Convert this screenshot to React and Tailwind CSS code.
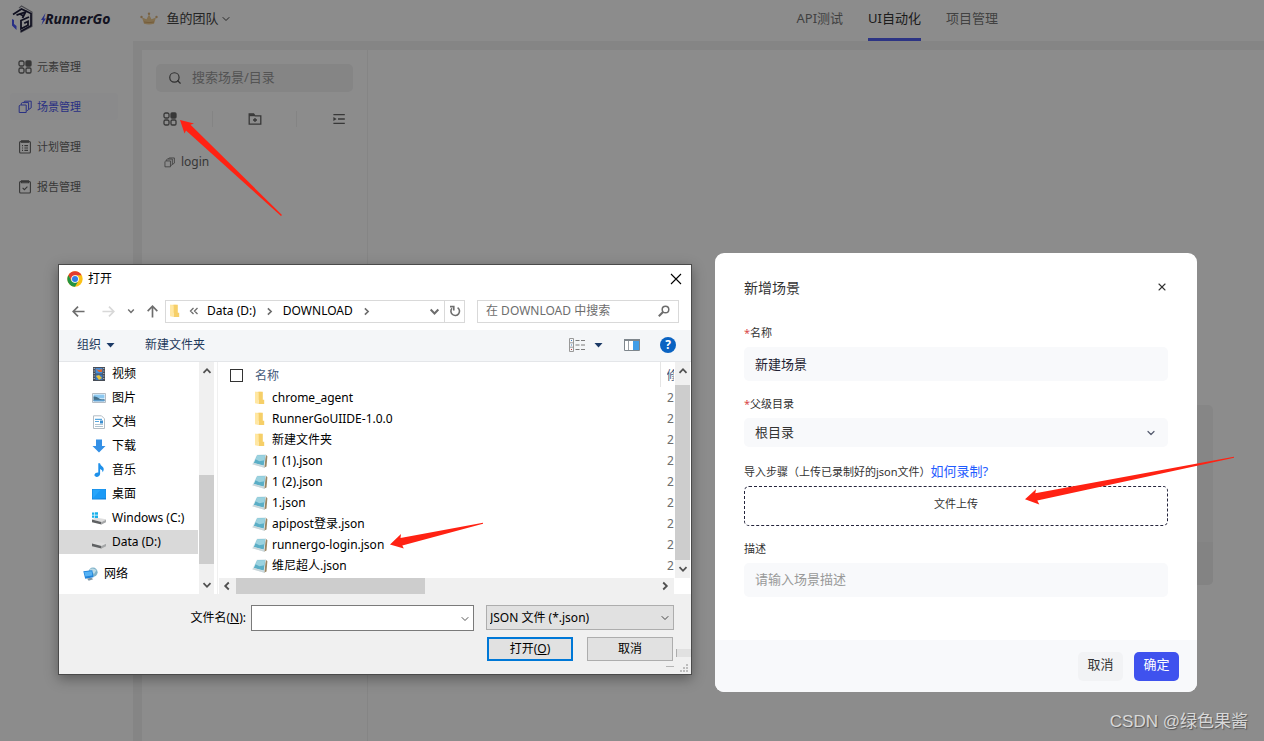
import { ChevronDown, Search, X } from 'lucide-react'

/* ---------- workspace icons ---------- */

const GridIcon = ({ className }) => (
  <svg viewBox="0 0 14 14" className={className} fill="none" stroke="currentColor" strokeWidth="1.3">
    <rect x="1" y="1" width="5" height="5" rx="1.6" />
    <rect x="8" y="1" width="5" height="5" rx="1" fill="currentColor" />
    <rect x="1" y="8" width="5" height="5" rx="1.6" />
    <rect x="8" y="8" width="5" height="5" rx="1.2" />
  </svg>
)

const LayersIcon = ({ className }) => (
  <svg viewBox="0 0 14 14" className={className} fill="none" stroke="currentColor" strokeWidth="1">
    <path d="M1.200 5.800l1-.8h6v7.500h-7z" />
    <path d="M3.400 4.800V3.200l1-.6h6.200v7L8.600 11" />
    <path d="M5.600 2.600l1-1.400h6.600v6.600l-2.400 1.600" />
  </svg>
)

const PlanIcon = ({ className }) => (
  <svg viewBox="0 0 14 14" className={className} fill="none" stroke="currentColor" strokeWidth="1.1">
    <rect x="1.6" y="1.6" width="10.8" height="11.4" rx="1" />
    <path d="M3.500 .8h7v1.400h-7z" fill="currentColor" />
    <path d="M4 5.6h1M6.4 5.6H10M4 8h1M6.4 8H10M4 10.4h1M6.4 10.4H10" />
  </svg>
)

const ReportIcon = ({ className }) => (
  <svg viewBox="0 0 14 14" className={className} fill="none" stroke="currentColor" strokeWidth="1.1">
    <rect x="1.6" y="1.6" width="10.8" height="11.4" rx="1" />
    <path d="M3.500 .8h7v2h-7z" />
    <path d="M4.6 7.8l1.8 1.8 3-3" />
  </svg>
)

const FolderPlusIcon = ({ className }) => (
  <svg viewBox="0 0 14 14" className={className} fill="none" stroke="currentColor" strokeWidth="1.3">
    <path d="M1.2 12.2V2h4.4l1.4 1.8h5.8v8.4z" />
    <path d="M1.2 3.200h5" strokeWidth="2" />
    <path d="M7 6v4M5 8h4" />
  </svg>
)

const IndentIcon = ({ className }) => (
  <svg viewBox="0 0 14 14" className={className} fill="none" stroke="currentColor" strokeWidth="1.4">
    <path d="M1.4 2.6h11.4M6 7h6.8M1.4 11.4h11.4" />
    <path d="M1.4 4.9v4.2L4.6 7z" fill="currentColor" stroke="none" />
  </svg>
)

const Logo = () => (
  <svg viewBox="0 0 23 28" className="h-7 w-[23px]" fill="none">
    <path d="M8 3.200L10.500 1 21 7v14.500L9.500 27.500" stroke="#84848e" strokeWidth="1.100" />
    <path d="M2 9.500L10.500 4l9.500 4.500v12.300L9.500 26.500" stroke="#1c1c3a" strokeWidth="1.700" />
    <path d="M5.500 10.200L14.500 7l-3 6M8.500 8.800l4.500 2.500" stroke="#1c1c3a" strokeWidth="1.800" />
    <path d="M18 12l-8 3.500v8.300l7-3.600v-3.700l-3.800 1.800" stroke="#1c1c3a" strokeWidth="1.800" />
    <path d="M1 14l2 1v4l2.500 2v4L1 20.500z" fill="#4b58f5" />
  </svg>
)

const Crown = () => (
  <svg viewBox="0 0 18 13" className="h-[13px] w-[18px]">
    <path d="M4 11.800L2 5.500l4.500 1.700L9 2.500l2.500 4.700L16 5.500l-2 6.300q-5 1.200-10 0z" fill="#edca90" />
    <path d="M4 10q5 1.200 10 0" stroke="#d6a869" fill="none" />
    <circle cx="9" cy="1.800" r="1.200" fill="#dcb27a" />
    <circle cx="1.500" cy="5" r="1.200" fill="#dcb27a" />
    <circle cx="16.500" cy="5" r="1.200" fill="#dcb27a" />
  </svg>
)

/* ---------- file picker icons ---------- */

const ChromeIcon = () => (
  <svg viewBox="0 0 48 48" className="size-4">
    <circle cx="24" cy="24" r="23" fill="#fbc116" />
    <path d="M4.100 12.500A23 23 0 0 1 43.900 12.500H24L14 29.800z" fill="#e33b2e" />
    <path d="M4.100 12.500A23 23 0 0 0 24 47L34 29.800 24 35 14 29.800z" fill="#229342" />
    <circle cx="24" cy="24" r="11.500" fill="#fff" />
    <circle cx="24" cy="24" r="9" fill="#2f7de9" />
  </svg>
)

const ArrowIcon = ({ className }) => (
  <svg viewBox="0 0 14 14" className={className} fill="none" stroke="currentColor" strokeWidth="1.800">
    <path d="M13.500 7H1.500M6.500 1.800L1.300 7l5.200 5.200" />
  </svg>
)

const Chevron = ({ className }) => (
  <svg viewBox="0 0 10 10" className={className} fill="none" stroke="currentColor" strokeWidth="1.800">
    <path d="M1.500 3.200L5 6.800l3.500-3.600" />
  </svg>
)

const Triangle = () => (
  <svg viewBox="0 0 9 5" className="h-[5px] w-[9px]">
    <path d="M.5 0h8L4.500 4.500z" fill="#1b3a66" />
  </svg>
)

const FolderIcon = () => (
  <svg viewBox="0 0 12 14" className="h-[14px] w-3">
    <path d="M1 .8h6.500v8H1z" fill="#ffe08d" />
    <path d="M4.500 .8h4.300v8h1.400V13H4.500z" fill="#f6cf68" />
    <path d="M1 .8l3.500 1V13L1 12.200z" fill="#ffe7a3" />
  </svg>
)

const JsonIcon = () => (
  <svg viewBox="0 0 16 14" className="h-[14px] w-4">
    <path d="M13.500 .4l1.900 1.800-.9 10.300-2.600 1.200z" fill="#9a8562" />
    <path d="M4.800 .8L14 .2l-1.700 13.600L.3 10.200z" fill="#dceaee" />
    <path d="M5.200 1.600l8-.5-1.500 10.300L1.800 9z" fill="#5aaec6" />
    <path d="M5.200 1.600l8-.5-.8 5.200-5 1L3.500 5.200z" fill="#9bd2df" />
    <path d="M.3 10.200l12 3.600.2-1.500L1.800 9z" fill="#c9d6da" />
  </svg>
)

const VideoIcon = () => (
  <svg viewBox="0 0 14 14" className="size-[14px]">
    <path d="M1 0h12v14H1z" fill="#474d57" />
    <path d="M3.500 1h7v5.500h-7z" fill="#4a8fd8" />
    <path d="M3.500 7.500h7V13h-7z" fill="#3b79c2" />
    <path d="M4 2l3 1 3-1v3H7z" fill="#e0662b" />
    <path d="M4 9l3-1 3 3-3 2z" fill="#e8c33a" />
    <path d="M2.200 1v12M11.800 1v12" stroke="#c8ccd2" strokeDasharray="1 1.500" />
  </svg>
)

const PictureIcon = () => (
  <svg viewBox="0 0 14 14" className="size-[14px]">
    <path d="M.5 2.500h13v9H.5z" fill="#fff" stroke="#b4bcc4" />
    <path d="M1.500 3.500h11v4h-11z" fill="#8cc8f0" />
    <path d="M1.500 5.500q3-.5 5 1.500t6 1v2h-11z" fill="#44708a" />
    <path d="M1.500 8.800h11v1.700h-11z" fill="#5b9dce" />
  </svg>
)

const DocIcon = () => (
  <svg viewBox="0 0 14 14" className="size-[14px]">
    <path d="M1.500 .8h8l3 3v9.700h-11z" fill="#fff" stroke="#b3bdc5" />
    <path d="M3 4.300h7M3 6.500h4" stroke="#58a7df" strokeWidth="1.200" />
    <path d="M8 5.500h3v3H8z" fill="#3c8fd0" />
    <path d="M3 9.500h8M3 11.500h8" stroke="#b0c4d1" />
  </svg>
)

const DownloadIcon = () => (
  <svg viewBox="0 0 14 14" className="size-[14px]">
    <path d="M4 .5h6V7h3.500L7 13.500.5 7H4z" fill="#3490e6" />
  </svg>
)

const MusicIcon = () => (
  <svg viewBox="0 0 14 14" className="size-[14px]">
    <path d="M6.300 .2h1.700q.4 2.500 2.800 3.900 1.900 1.800 0 5.200-.1-2.500-2.700-3.400V11q-.5 2.700-3.500 2.900-2.500-.3-2.100-2.300.7-2.200 3.800-2z" fill="#1e90ea" />
  </svg>
)

const DesktopIcon = () => (
  <svg viewBox="0 0 14 14" className="size-[14px]">
    <path d="M0 2h14v10.500H0z" fill="#1383dc" />
    <path d="M.6 2.600h12.800v8.400L.6 11.400z" fill="#27a5fb" />
    <path d="M.6 11.400L9 2.600h4.400V11z" fill="#1b9af6" />
  </svg>
)

const DriveIcon = ({ windows }) => (
  <svg viewBox="0 0 14 14" className="size-[14px]">
    <path d="M0 8.600l3.500-2.200L14 8.200v.8l-4.500 2z" fill="#dedede" />
    <path d="M0 8.600l9.500 2.400v2.600L0 11.200z" fill="#5f6163" />
    <path d="M9.500 11L14 8.800v2.400l-4.500 2.400z" fill="#a5a7a8" />
    {windows && <path d="M0 1.500h2.400v2.300H0zM3 1.200h3v2.600H3zM0 4.400h2.400v2.300H0zM3 4.400h3V7H3z" fill="#18b0ea" />}
  </svg>
)

const NetworkIcon = () => (
  <svg viewBox="0 0 15 14" className="h-[14px] w-[15px]">
    <circle cx="10" cy="5.200" r="4.600" fill="#7fb2c9" />
    <path d="M6.500 2.500q3.500-2.500 7 .8L11 7z" fill="#bddbe6" />
    <path d="M.3 4.300L9.300 3.300l1.200 6.900-8.300 1.500z" fill="#1f83da" />
    <path d="M1.200 5.100l7.400-.9.800 4.200-7 1.200z" fill="#55b2f5" />
    <path d="M4 11.500l4.500-.8 1.700 1.600-4.500 1.400z" fill="#7f96a5" />
  </svg>
)

/* ---------- data ---------- */

const sideNav = [
  { label: '元素管理', icon: GridIcon },
  { label: '场景管理', icon: LayersIcon, active: true },
  { label: '计划管理', icon: PlanIcon },
  { label: '报告管理', icon: ReportIcon },
]

const tree = [
  { label: '视频', icon: <VideoIcon /> },
  { label: '图片', icon: <PictureIcon /> },
  { label: '文档', icon: <DocIcon /> },
  { label: '下载', icon: <DownloadIcon /> },
  { label: '音乐', icon: <MusicIcon /> },
  { label: '桌面', icon: <DesktopIcon /> },
  { label: 'Windows (C:)', icon: <DriveIcon windows /> },
  { label: 'Data (D:)', icon: <DriveIcon />, active: true },
]

const files = [
  { name: 'chrome_agent', folder: true },
  { name: 'RunnerGoUIIDE-1.0.0', folder: true },
  { name: '新建文件夹', folder: true },
  { name: '1 (1).json' },
  { name: '1 (2).json' },
  { name: '1.json' },
  { name: 'apipost登录.json' },
  { name: 'runnergo-login.json' },
  { name: '维尼超人.json' },
]

/* ---------- workspace ---------- */

function Header() {
  return (
    <header className="flex h-[41px] shrink-0">
      <div className="flex h-[37px] items-center pl-[11px]">
        <Logo />
        <div className="ml-[7px] flex items-center">
          <svg viewBox="0 0 5 12" className="h-3 w-[5px]">
            <path d="M4.500 0L0 7h2L.5 12 5 5.500H3z" fill="#4b58f5" />
          </svg>
          <span className="-ml-px font-['Open_Sans',sans-serif] text-[14px] leading-5 font-bold text-[#24243c] italic">RunnerGo</span>
        </div>
      </div>
      <button className="ml-[30px] flex h-[37px] items-center text-[13px] text-[#444]">
        <Crown />
        <span className="ml-2">鱼的团队</span>
        <ChevronDown className="ml-[2px] size-3" strokeWidth={2} />
      </button>
      <nav className="mr-[266px] ml-auto flex h-full gap-[25px] text-[13px] text-[#777]">
        <a href="#api" className="flex items-center pb-1">API测试</a>
        <a href="#ui" className="flex items-center border-b-3 border-[#5060f0] pb-px text-[#333]">UI自动化</a>
        <a href="#project" className="flex items-center pb-1">项目管理</a>
      </nav>
    </header>
  )
}

function Sidebar() {
  return (
    <nav className="flex w-[133px] shrink-0 flex-col gap-[13px] pt-[12px] pr-[15px] pl-[10px]">
      {sideNav.map(({ label, icon: Icon, active }) => (
        <a
          key={label}
          href="#nav"
          className={`flex h-[27px] items-center gap-[5px] rounded-sm pl-2 text-[11px] ${active ? 'bg-[#fbfbfd] text-[#4c58ee]' : 'text-[#666]'}`}
        >
          <Icon className="size-[14px]" />
          <span className="pt-px">{label}</span>
        </a>
      ))}
    </nav>
  )
}

function ScenePanel() {
  return (
    <aside className="w-[226px] shrink-0 border-r border-[#f3f3f3] px-[14px] pt-[14px]">
      <label className="flex h-7 items-center gap-[10px] rounded-[5px] bg-[#f2f2f3] pl-3">
        <Search className="size-[14px] shrink-0 text-[#555]" />
        <input className="w-full min-w-0 bg-transparent text-[13px] outline-none placeholder:text-[#999]" placeholder="搜索场景/目录" aria-label="搜索场景/目录" />
      </label>
      <div className="mx-[7px] mt-[19px] flex h-4 items-center justify-between text-[#666]">
        <button aria-label="新建场景"><GridIcon className="size-[14px]" /></button>
        <span className="h-4 w-px bg-[#f0f0f0]" />
        <button aria-label="新建目录"><FolderPlusIcon className="size-[14px]" /></button>
        <span className="h-4 w-px bg-[#f0f0f0]" />
        <button aria-label="展开"><IndentIcon className="size-[14px]" /></button>
      </div>
      <a href="#login" className="mt-[25px] ml-2 flex h-5 items-center gap-[6px] text-[12px] text-[#666]">
        <LayersIcon className="size-[11px]" />
        login
      </a>
    </aside>
  )
}

/* ---------- file picker ---------- */

function AddressRow() {
  return (
    <div className="flex h-9 items-center pr-3 pb-[2px] pl-1 text-[#6d6d6d]">
      <button aria-label="后退" className="flex w-[30px] justify-center"><ArrowIcon className="size-[13px]" /></button>
      <button aria-label="前进" className="flex w-[30px] justify-center text-[#d8d8d8]"><ArrowIcon className="size-[13px] rotate-180" /></button>
      <button aria-label="最近" className="flex w-4 justify-center"><Chevron className="size-2" /></button>
      <button aria-label="上移" className="flex w-[26px] justify-center"><ArrowIcon className="size-[13px] rotate-90" /></button>
      <div className="flex h-[23px] flex-1 items-center border border-[#d9d9d9] pl-[3px]">
        <FolderIcon />
        <svg viewBox="0 0 10 10" className="ml-2 size-[10px]" fill="none" stroke="currentColor" strokeWidth="1.300">
          <path d="M4.500 2L1.500 5l3 3M8.500 2l-3 3 3 3" />
        </svg>
        <span className="ml-2 text-black">Data (D:)</span>
        <Chevron className="ml-[9px] size-[9px] -rotate-90" />
        <span className="ml-[9px] text-black">DOWNLOAD</span>
        <Chevron className="ml-[9px] size-[9px] -rotate-90" />
        <Chevron className="mr-1 ml-auto size-[11px]" />
        <button aria-label="刷新" className="flex h-full w-5 items-center justify-center border-l border-[#d9d9d9]">
          <svg viewBox="0 0 12 12" className="size-3" fill="none" stroke="currentColor" strokeWidth="1.600">
            <path d="M8.600 2.600A4.300 4.300 0 1 1 3 3.300" />
            <path d="M1 1.600h3.800v4" />
          </svg>
        </button>
      </div>
      <label className="ml-3 flex h-[23px] w-[202px] items-center border border-[#d9d9d9] px-2">
        <input className="w-full min-w-0 outline-none placeholder:text-[#6d6d6d]" placeholder="在 DOWNLOAD 中搜索" aria-label="搜索" />
        <svg viewBox="0 0 12 12" className="size-3 shrink-0" fill="none" stroke="currentColor" strokeWidth="1.500">
          <circle cx="7.500" cy="4.500" r="3.300" />
          <path d="M5 7L.8 11.200" strokeWidth="2" />
        </svg>
      </label>
    </div>
  )
}

function Toolbar() {
  return (
    <div className="flex h-8 items-center border-b border-[#e4e6e9] bg-[#f4f6f8] pr-[15px] pb-px pl-[18px] text-[#1e395b]">
      <button className="flex items-center gap-[5px]">组织 <Triangle /></button>
      <button className="ml-[30px]">新建文件夹</button>
      <button aria-label="视图" className="ml-auto flex items-center gap-2">
        <svg viewBox="0 0 17 14" className="h-[14px] w-[17px]" fill="none">
          <path d="M.5.5h4v13h-4zM.5 4.800h4M.5 9.200h4" stroke="#999" />
          <path d="M2 2.500h1M2 7h1" stroke="#467fc3" />
          <path d="M2 11.500h1" stroke="#c33" />
          <path d="M6.500 2.500h4M12 2.500h4M6.500 7h4M12 7h4M6.500 11.500h4M12 11.500h4" stroke="#7c7c7c" />
        </svg>
        <Triangle />
      </button>
      <button aria-label="预览窗格" className="ml-[21px]">
        <svg viewBox="0 0 16 12" className="h-3 w-4">
          <path d="M.5.5h15v11H.5z" fill="#fff" stroke="#7e868c" />
          <path d="M0 0h16v2H0z" fill="#7e868c" />
          <path d="M4.500 2v9" stroke="#9aa0a5" />
          <path d="M9 2h6v9H9z" fill="#3f9de8" />
        </svg>
      </button>
      <button aria-label="帮助" className="ml-5 flex size-4 items-center justify-center rounded-full bg-[#0a63c2] text-[12px] leading-4 font-bold text-white">?</button>
    </div>
  )
}

function Tree() {
  return (
    <div className="flex w-[155px] shrink-0">
      <ul className="flex-1">
        {tree.map((item) => (
          <li key={item.label} className={`flex h-6 items-center gap-[6px] pl-[33px] whitespace-nowrap ${item.active ? 'bg-[#d9d9d9]' : ''}`}>
            {item.icon}
            {item.label}
          </li>
        ))}
        <li className="mt-2 flex h-6 items-center gap-[6px] pl-6">
          <NetworkIcon />
          网络
        </li>
      </ul>
      <div className="ml-px flex w-[15px] flex-col items-center bg-[#f0f0f0] py-1 text-[#505050]">
        <Chevron className="size-[10px] rotate-180" />
        <span className="mt-[99px] h-[89px] w-full bg-[#cdcdcd]" />
        <Chevron className="mt-auto size-[10px]" />
      </div>
    </div>
  )
}

function FileList() {
  return (
    <div className="ml-[3px] flex min-w-0 flex-1 flex-col border-l border-[#f0f0f0] px-px">
      <div className="flex flex-1">
        <table className="h-fit min-w-0 flex-1 table-fixed border-collapse">
          <colgroup>
            <col />
            <col className="w-[14px]" />
          </colgroup>
          <thead>
            <tr className="h-[25px] text-left text-[#44597a]">
              <th className="p-0 pt-[2px] font-normal">
                <div className="flex items-center gap-3 pl-[11px]">
                  <input type="checkbox" aria-label="全选" className="size-[13px] appearance-none border border-[#333] bg-white" />
                  名称
                </div>
              </th>
              <th className="overflow-hidden border-l border-[#e5e5e5] p-0 pt-[2px] pl-[6px] font-normal">
                <div className="w-[7px] overflow-hidden whitespace-nowrap">修</div>
              </th>
            </tr>
          </thead>
          <tbody>
            {files.map((file) => (
              <tr key={file.name} className="h-[21px]">
                <td className="p-0">
                  <div className="flex items-center gap-1 pl-[33px] leading-[21px]">
                    <span className="flex w-4 justify-center">{file.folder ? <FolderIcon /> : <JsonIcon />}</span>
                    {file.name}
                  </div>
                </td>
                <td className="p-0 pl-[7px] text-[#6d6d6d]">2</td>
              </tr>
            ))}
          </tbody>
        </table>
        <div className="ml-px flex w-[15px] flex-col items-center bg-[#f0f0f0] py-1 text-[#505050]">
          <Chevron className="size-[10px] rotate-180" />
          <span className="mt-[9px] w-full flex-1 bg-[#cdcdcd]" />
          <Chevron className="mt-1 size-[10px]" />
        </div>
      </div>
      <div className="mr-4 flex h-4 items-center bg-[#f0f0f0] pr-1 pl-[3px] text-[#505050]">
        <Chevron className="size-[10px] rotate-90" />
        <span className="ml-1 h-full w-[189px] bg-[#cdcdcd]" />
        <Chevron className="ml-auto size-[10px] -rotate-90" />
      </div>
    </div>
  )
}

function PickerFooter() {
  return (
    <div className="relative h-20 bg-[#f0f0f0] pt-[11px]">
      <div className="flex items-start justify-end pr-[17px]">
        <label htmlFor="file-name" className="mr-[5px] leading-[26px]">文件名(<u>N</u>):</label>
        <div className="relative mr-3 h-[26px] w-[223px]">
          <input id="file-name" className="size-full border border-[#7a7a7a] bg-white px-1 outline-none" />
          <ChevronDown className="pointer-events-none absolute top-2 right-[3px] size-3 text-[#555]" />
        </div>
        <div className="relative h-[25px] w-[188px]">
          <select aria-label="文件类型" className="size-full appearance-none border border-[#adadad] bg-[#e1e1e1] pl-[3px]">
            <option>JSON 文件 (*.json)</option>
          </select>
          <ChevronDown className="pointer-events-none absolute top-[7px] right-[3px] size-3 text-[#444]" />
        </div>
      </div>
      <div className="mt-[6px] flex justify-end gap-[14px] pr-[18px]">
        <button className="h-6 w-[86px] border-2 border-[#0078d7] bg-[#e1e1e1]">打开(<u>O</u>)</button>
        <button className="h-6 w-[86px] border border-[#adadad] bg-[#e1e1e1]">取消</button>
      </div>
      <span className="absolute right-0 bottom-[17px] h-2 w-[15px] border-l border-[#adadad] bg-[#e1e1e1]" />
      <span className="absolute right-[17px] bottom-[7px] h-px w-2 bg-[#b5b5b5]" />
      <svg viewBox="0 0 8 8" className="absolute right-[3px] bottom-[2px] size-2" fill="#bdbdbd">
        <path d="M6 0h2v2H6zM3 3h2v2H3zM6 3h2v2H6zM0 6h2v2H0zM3 6h2v2H3zM6 6h2v2H6z" />
      </svg>
    </div>
  )
}

function FilePicker() {
  return (
    <section className="absolute top-[264px] left-[58px] w-[634px] border border-[#4a4a4a] bg-white text-[12px] leading-4 text-black shadow-[0_4px_12px_rgba(0,0,0,0.35)]">
      <div className="flex h-[29px] items-center pr-[9px] pb-px pl-2">
        <ChromeIcon />
        <h2 className="ml-[5px]">打开</h2>
        <button aria-label="关闭" className="ml-auto">
          <svg viewBox="0 0 12 12" className="size-3" stroke="#000" strokeWidth="1.100">
            <path d="M1 1l10 10M11 1L1 11" />
          </svg>
        </button>
      </div>
      <AddressRow />
      <Toolbar />
      <div className="flex h-[232px]">
        <Tree />
        <FileList />
      </div>
      <PickerFooter />
    </section>
  )
}

/* ---------- new scene modal ---------- */

function SceneModal() {
  return (
    <section className="absolute top-[253px] left-[715px] w-[482px] overflow-hidden rounded-[9px] bg-white text-[#333]">
      <form className="px-[29px] pt-6 pb-[43px] text-[11px] leading-[18px]">
        <div className="flex items-center justify-between">
          <h2 className="text-[14px] leading-[22px]">新增场景</h2>
          <button type="button" aria-label="关闭" className="pb-[2px]"><X className="size-3" strokeWidth={2.2} /></button>
        </div>

        <label htmlFor="scene-name" className="mt-[25px] block"><span className="text-[#d94a4a]">*</span>名称</label>
        <input id="scene-name" defaultValue="新建场景" className="mt-[5px] block h-[34px] w-full rounded-[5px] bg-[#f8f9fb] px-[11px] pb-[2px] text-[13px] text-[#1f1f33] outline-none" />

        <label htmlFor="scene-parent" className="mt-[14px] block"><span className="text-[#d94a4a]">*</span>父级目录</label>
        <div className="relative mt-[5px]">
          <select id="scene-parent" className="block h-[29px] w-full appearance-none rounded-[5px] bg-[#f8f9fb] px-[11px] pb-[2px] text-[13px]">
            <option>根目录</option>
          </select>
          <ChevronDown className="pointer-events-none absolute top-[9px] right-[11px] size-3 text-[#555b6e]" strokeWidth={2.4} />
        </div>

        <div className="mt-4 flex items-center">
          导入步骤（上传已录制好的json文件）
          <a href="#guide" className="pb-[2px] text-[13px] leading-4 text-[#1f5cff]">如何录制?</a>
        </div>
        <button type="button" className="mt-[5px] block h-10 w-full rounded-[5px] border border-dashed border-[#24243c] pb-1">文件上传</button>

        <label htmlFor="scene-desc" className="mt-[14px] block">描述</label>
        <input id="scene-desc" placeholder="请输入场景描述" className="mt-[5px] block h-[34px] w-full rounded-[5px] bg-[#f8f9fb] px-[11px] pb-[2px] text-[13px] outline-none placeholder:text-[#999]" />
      </form>
      <div className="flex h-[52px] items-center justify-end gap-[11px] bg-[#f8f9fb] pr-[18px] text-[13px]">
        <button className="h-[29px] w-[45px] rounded-[5px] bg-[#f2f3f5] pb-[2px]">取消</button>
        <button className="h-[29px] w-[45px] rounded-[5px] bg-[#3f52ee] pb-[2px] text-white">确定</button>
      </div>
    </section>
  )
}

export default function App() {
  return (
    <div className="relative flex min-h-screen flex-col overflow-hidden bg-white font-['Noto_Sans','Noto_Sans_CJK_SC',sans-serif]">
      <Header />
      <div className="flex flex-1">
        <Sidebar />
        <div className="flex flex-1 bg-[#f2f2f2] pt-[9px] pl-[9px]">
          <div className="flex flex-1 bg-white">
            <ScenePanel />
            <main className="flex flex-1 justify-end pt-[355px] pr-[51px]">
              <div className="h-[180px] w-[432px] overflow-hidden rounded-[5px] bg-[#f4f4f4] pt-[137px]">
                <div className="h-full bg-[#efefef]" />
              </div>
            </main>
          </div>
        </div>
      </div>
      <div className="absolute inset-0 bg-black/45" />

      <FilePicker />
      <SceneModal />

      {/* pointer arrows */}
      <svg viewBox="0 0 104 98" className="pointer-events-none absolute top-[119px] left-[179px] h-[98px] w-[104px]" fill="#ff2213">
        <path d="M1 1l14 3.500-3.500 1.300L103 96l-1 1L7 11.500l-1.500 3z" />
      </svg>
      <svg viewBox="0 0 94 28" className="pointer-events-none absolute top-[522px] left-[389px] h-7 w-[94px]" fill="#ff2213">
        <path d="M1 22.500L12 12l-.5 4L94 .8v1L13.300 23.500l1.500 3z" />
      </svg>
      <svg viewBox="0 0 210 50" className="pointer-events-none absolute top-[456px] left-[1024px] h-[50px] w-[210px]" fill="#ff2213">
        <path d="M1 43.300l11-10-.7 4L210 .8v1L13.300 44.500l2 4z" />
      </svg>

      <p className="absolute right-4 bottom-2 font-['Liberation_Sans','Noto_Sans_CJK_SC',sans-serif] text-[17px] leading-[22px] text-[#d8d8d8] [text-shadow:1px_1px_1px_#555]">CSDN @绿色果酱</p>
    </div>
  )
}
